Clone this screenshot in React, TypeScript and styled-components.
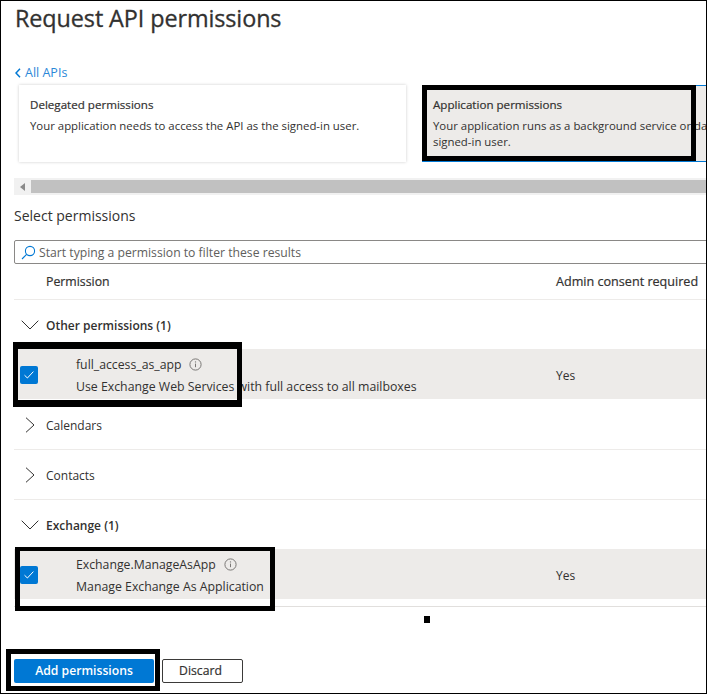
import React from "react";
import styled, { createGlobalStyle } from "styled-components";

const FONT = `"Open Sans", "Noto Sans", sans-serif`;

const GlobalStyle = createGlobalStyle`
  html, body {
    margin: 0;
    padding: 0;
    background: #fff;
  }
  body {
    font-family: ${FONT};
    color: #323130;
  }
`;

const InfoIcon = () => (
  <svg width="13" height="13" viewBox="0 0 13 13" fill="none">
    <circle cx="6.5" cy="6.5" r="5.6" stroke="#7a7876" strokeWidth="1" />
    <path d="M6.5 5.6v3.6" stroke="#7a7876" strokeWidth="1" />
    <circle cx="6.5" cy="3.9" r="0.7" fill="#7a7876" />
  </svg>
);

const CheckIcon = () => (
  <svg width="12" height="10" viewBox="0 0 12 10" fill="none">
    <path d="M1.5 5.2 4.4 8l6-6.4" stroke="#fff" strokeWidth="1" />
  </svg>
);

const Caret = ({ open }: { open: boolean }) =>
  open ? (
    <svg width="18" height="10" viewBox="0 0 18 10" fill="none">
      <path d="M.7.7 9 9l8.3-8.3" stroke="#323130" strokeWidth="1" />
    </svg>
  ) : (
    <svg width="10" height="16" viewBox="0 0 10 16" fill="none">
      <path d="M1 .7 9 8l-8 7.3" stroke="#323130" strokeWidth="1" />
    </svg>
  );

const permissionGroups = [
  {
    name: "Other permissions (1)",
    open: true,
    item: {
      name: "full_access_as_app",
      description: "Use Exchange Web Services with full access to all mailboxes",
    },
  },
  { name: "Calendars", open: false },
  { name: "Contacts", open: false },
  {
    name: "Exchange (1)",
    open: true,
    item: {
      name: "Exchange.ManageAsApp",
      description: "Manage Exchange As Application",
    },
  },
];

const App = () => (
  <>
    <GlobalStyle />
    <Frame>
      <Title>Request API permissions</Title>
      <BackLink>
        <svg width="6" height="10" viewBox="0 0 6 10" fill="none">
          <path d="M5 .8 1 5l4 4.2" stroke="#0078d4" strokeWidth="1.5" />
        </svg>
        All APIs
      </BackLink>
      <Cards>
        <Card>
          <CardTitle>Delegated permissions</CardTitle>
          <CardText>Your application needs to access the API as the signed-in user.</CardText>
        </Card>
        <Card $selected>
          <CardTitle>Application permissions</CardTitle>
          <CardText>
            Your application runs as a background service or daemon without a
            <br />
            signed-in user.
          </CardText>
        </Card>
      </Cards>
      <ScrollBar>
        <ScrollButton>
          <svg width="5" height="8" viewBox="0 0 5 8">
            <path d="M5 0v8L0 4z" fill="#8a8a8a" />
          </svg>
        </ScrollButton>
        <ScrollThumb />
      </ScrollBar>
      <SectionLabel>Select permissions</SectionLabel>
      <SearchBox>
        <svg width="15" height="15" viewBox="0 0 15 15" fill="none">
          <circle cx="9" cy="6" r="4.6" stroke="#0078d4" strokeWidth="1.1" />
          <path d="M5.6 9.4 1 14" stroke="#0078d4" strokeWidth="1.1" />
        </svg>
        <SearchHint>Start typing a permission to filter these results</SearchHint>
      </SearchBox>
      <HeaderRow>
        <HeaderName>Permission</HeaderName>
        <HeaderConsent>Admin consent required</HeaderConsent>
      </HeaderRow>
      {permissionGroups.map((group) => (
        <Group key={group.name}>
          <GroupRow $open={group.open}>
            <CaretSlot>
              <Caret open={group.open} />
            </CaretSlot>
            <GroupName $open={group.open}>{group.name}</GroupName>
          </GroupRow>
          {group.item && (
            <ItemRow>
              <Check>
                <CheckIcon />
              </Check>
              <ItemBody>
                <ItemName>
                  {group.item.name}
                  <InfoIcon />
                </ItemName>
                <ItemDescription>{group.item.description}</ItemDescription>
              </ItemBody>
              <ItemConsent>Yes</ItemConsent>
            </ItemRow>
          )}
        </Group>
      ))}
      <ListEnd />
      <Actions>
        <PrimaryButton>Add permissions</PrimaryButton>
        <SecondaryButton>Discard</SecondaryButton>
      </Actions>
      <Callout $left={422} $top={85} $width={274} $height={76} $bar={5} />
      <Callout $left={13} $top={342} $width={229} $height={65} $bar={7} />
      <Callout $left={15} $top={547} $width={260} $height={64} $bar={4} />
      <Callout $left={6} $top={649} $width={154} $height={42} $bar={5} />
      <Marker />
    </Frame>
  </>
);

export default App;

const Frame = styled.div`
  position: relative;
  box-sizing: border-box;
  width: 707px;
  height: 694px;
  padding-left: 13px;
  border: 1px solid #000;
  overflow: hidden;
  background: #fff;
`;

const Title = styled.h1`
  margin: 0;
  height: 35px;
  padding-left: 1px;
  font-size: 23.4px;
  line-height: 34px;
  font-weight: 400;
  letter-spacing: -0.1px;
  -webkit-text-stroke: 0.3px #323130;
`;

const BackLink = styled.div`
  display: flex;
  align-items: center;
  gap: 4px;
  height: 18px;
  margin-top: 28px;
  padding-left: 1px;
  font-size: 12.5px;
  line-height: 18px;
  color: #2b88d8;
`;

const Cards = styled.div`
  display: flex;
  gap: 16px;
  margin: 3px 0 0 5px;
  width: 720px;
`;

const Card = styled.div<{ $selected?: boolean }>`
  box-sizing: border-box;
  flex: none;
  height: 77px;
  width: ${({ $selected }) => ($selected ? "310px" : "387px")};
  padding: ${({ $selected }) => ($selected ? "10px" : "11px")};
  background: ${({ $selected }) => ($selected ? "#edebe9" : "#fff")};
  border: ${({ $selected }) => ($selected ? "1px solid #0078d4" : "none")};
  box-shadow: ${({ $selected }) => ($selected ? "none" : "0 0 3px rgba(0, 0, 0, 0.2)")};
`;

const CardTitle = styled.div`
  font-size: 11.6px;
  line-height: 18px;
  font-weight: 400;
  -webkit-text-stroke: 0.2px #323130;
`;

const CardText = styled.div`
  margin-top: 4px;
  font-size: 11.4px;
  line-height: 16px;
  white-space: nowrap;
`;

const ScrollBar = styled.div`
  display: flex;
  align-items: stretch;
  height: 17px;
  margin-top: 16px;
  background: #f1f1f1;
`;

const ScrollButton = styled.div`
  display: flex;
  align-items: center;
  justify-content: center;
  width: 17px;
  flex: none;
`;

const ScrollThumb = styled.div`
  flex: 1;
  margin: 2px 0;
  background: #c1c1c1;
`;

const SectionLabel = styled.div`
  height: 22px;
  margin-top: 10px;
  font-size: 14px;
  line-height: 22px;
`;

const SearchBox = styled.div`
  box-sizing: border-box;
  display: flex;
  align-items: center;
  gap: 3px;
  height: 24px;
  margin: 13px -2px 0 0;
  padding-left: 6px;
  border: 1px solid #8a8886;
  border-radius: 2px;
`;

const SearchHint = styled.span`
  font-size: 12.2px;
  color: #605e5c;
`;

const HeaderRow = styled.div`
  box-sizing: border-box;
  display: flex;
  align-items: center;
  height: 36px;
  border-bottom: 1px solid #edebe9;
`;

const HeaderName = styled.div`
  width: 510px;
  padding-left: 32px;
  box-sizing: border-box;
  font-size: 12.3px;
  -webkit-text-stroke: 0.2px #323130;
`;

const HeaderConsent = styled.div`
  margin-left: 32px;
  font-size: 12.6px;
  -webkit-text-stroke: 0.2px #323130;
  white-space: nowrap;
`;

const Group = styled.div``;

const GroupRow = styled.div<{ $open?: boolean }>`
  box-sizing: border-box;
  display: flex;
  align-items: center;
  height: ${({ $open }) => ($open ? "49px" : "50px")};
  border-bottom: ${({ $open }) => ($open ? "none" : "1px solid #edebe9")};
`;

const CaretSlot = styled.div`
  display: flex;
  justify-content: center;
  width: 32px;
`;

const GroupName = styled.div<{ $open?: boolean }>`
  margin-top: 2px;
  font-size: 12px;
  font-weight: ${({ $open }) => ($open ? 600 : 400)};
`;

const ItemRow = styled.div`
  box-sizing: border-box;
  display: flex;
  align-items: center;
  height: 50px;
  margin-bottom: 1px;
  padding-top: 2px;
  background: #edebe9;
`;

const Check = styled.div`
  box-sizing: border-box;
  display: flex;
  align-items: center;
  justify-content: center;
  flex: none;
  width: 18px;
  height: 18px;
  margin-left: 6px;
  border-radius: 2px;
  background: #0078d4;
`;

const ItemBody = styled.div`
  width: 486px;
  flex: none;
  margin-top: 2px;
  padding-left: 38px;
  box-sizing: border-box;
`;

const ItemName = styled.div`
  display: flex;
  align-items: center;
  gap: 8px;
  height: 21px;
  font-size: 12.25px;
  white-space: nowrap;
`;

const ItemDescription = styled.div`
  height: 22px;
  margin-top: 1px;
  font-size: 12.3px;
  line-height: 22px;
  white-space: nowrap;
`;

const ItemConsent = styled.div`
  margin-left: 32px;
  font-size: 12px;
`;

const ListEnd = styled.div`
  height: 6px;
  border-bottom: 1px solid #e1dfdd;
`;

const Actions = styled.div`
  display: flex;
  gap: 8px;
  margin-top: 52px;
`;

const PrimaryButton = styled.button`
  box-sizing: border-box;
  width: 140px;
  height: 24px;
  padding: 0 0 2px;
  border: none;
  border-radius: 2px;
  background: #0078d4;
  color: #fff;
  font-family: ${FONT};
  font-size: 12.2px;
  font-weight: 600;
`;

const SecondaryButton = styled.button`
  box-sizing: border-box;
  width: 81px;
  height: 24px;
  padding: 0 4px 2px 0;
  border: 1px solid #3b3a39;
  border-radius: 2px;
  background: #fff;
  color: #323130;
  font-family: ${FONT};
  font-size: 12.2px;
  -webkit-text-stroke: 0.2px #323130;
`;

// black review marks drawn over the screenshot
const Callout = styled.div<{ $left: number; $top: number; $width: number; $height: number; $bar: number }>`
  position: absolute;
  box-sizing: border-box;
  left: ${({ $left }) => $left - 1}px;
  top: ${({ $top }) => $top - 1}px;
  width: ${({ $width }) => $width}px;
  height: ${({ $height }) => $height}px;
  border: 5px solid #000;
  border-top-width: ${({ $bar }) => $bar}px;
  border-bottom-width: ${({ $bar }) => Math.max($bar, 5)}px;
`;

const Marker = styled.div`
  position: absolute;
  left: 423px;
  top: 615px;
  width: 6px;
  height: 7px;
  background: #000;
`;
